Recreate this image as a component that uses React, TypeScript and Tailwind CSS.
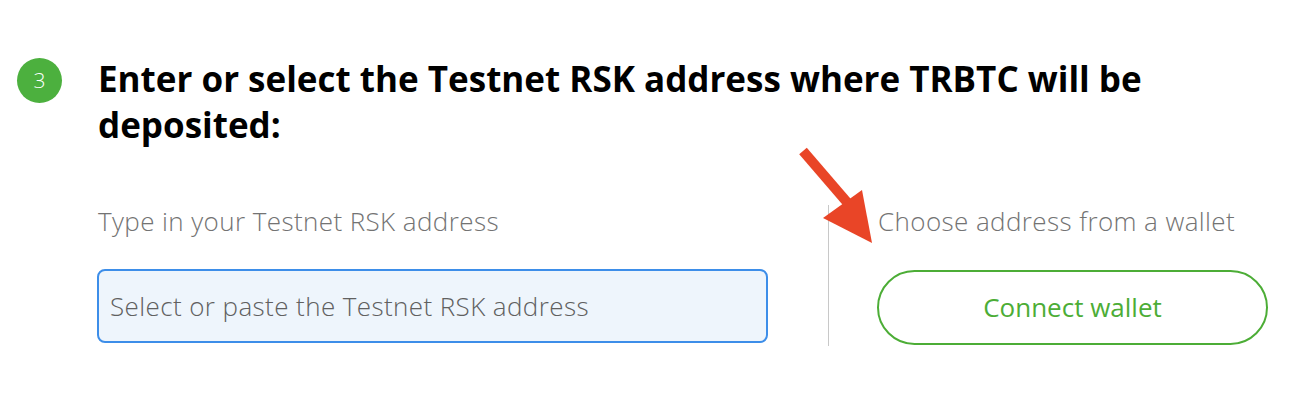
import React from 'react';

const font = { fontFamily: '"Open Sans", "Noto Sans", sans-serif' };

const Arrow: React.FC = () => (
  <svg className="absolute left-[790px] top-[140px]" width="100" height="110" viewBox="0 0 100 110">
    <line x1="13" y1="11" x2="62" y2="68" stroke="#e94527" strokeWidth="10" />
    <polygon points="33,78 72,50 82,103" fill="#e94527" />
  </svg>
);

const App: React.FC = () => {
  return (
    <div className="relative w-[1312px] h-[402px] bg-white" style={font}>
      <div className="flex items-start pt-[56px]">
        <div className="ml-[17px] mt-[2px] w-[45px] h-[45px] rounded-full bg-[#4cb03e] flex items-center justify-center text-white text-[21px] font-light">
          3
        </div>
        <h2 className="ml-[36px] text-[35px] leading-[46px] font-bold text-black w-[1160px]">
          Enter or select the Testnet RSK address where TRBTC will be deposited:
        </h2>
      </div>

      <div className="flex pl-[97px] mt-[57px]">
        <div className="w-[671px] pt-[1px]">
          <p className="text-[26px] leading-[30px] font-light tracking-[0.4px] text-[#737373] pl-[1px]">Type in your Testnet RSK address</p>
          <div className="mt-[33px] h-[74px] rounded-lg border-2 border-[#3d8ee9] bg-[#eef5fc] flex items-center px-[11px]">
            <span className="text-[26px] font-light tracking-[0.4px] text-[#606060]">Select or paste the Testnet RSK address</span>
          </div>
        </div>
        <div className="ml-[60px] w-px h-[141px] bg-[#c8c8c8]" />
        <div className="ml-[48px] w-[391px] pt-[1px]">
          <p className="text-[26px] leading-[30px] font-light tracking-[0.4px] text-[#737373] pl-[1px]">Choose address from a wallet</p>
          <button className="mt-[34px] w-full h-[75px] rounded-full border-2 border-[#4cad36] text-[#4cad36] text-[26px] font-normal">
            Connect wallet
          </button>
        </div>
      </div>

      <Arrow />
    </div>
  );
};

export default App;
